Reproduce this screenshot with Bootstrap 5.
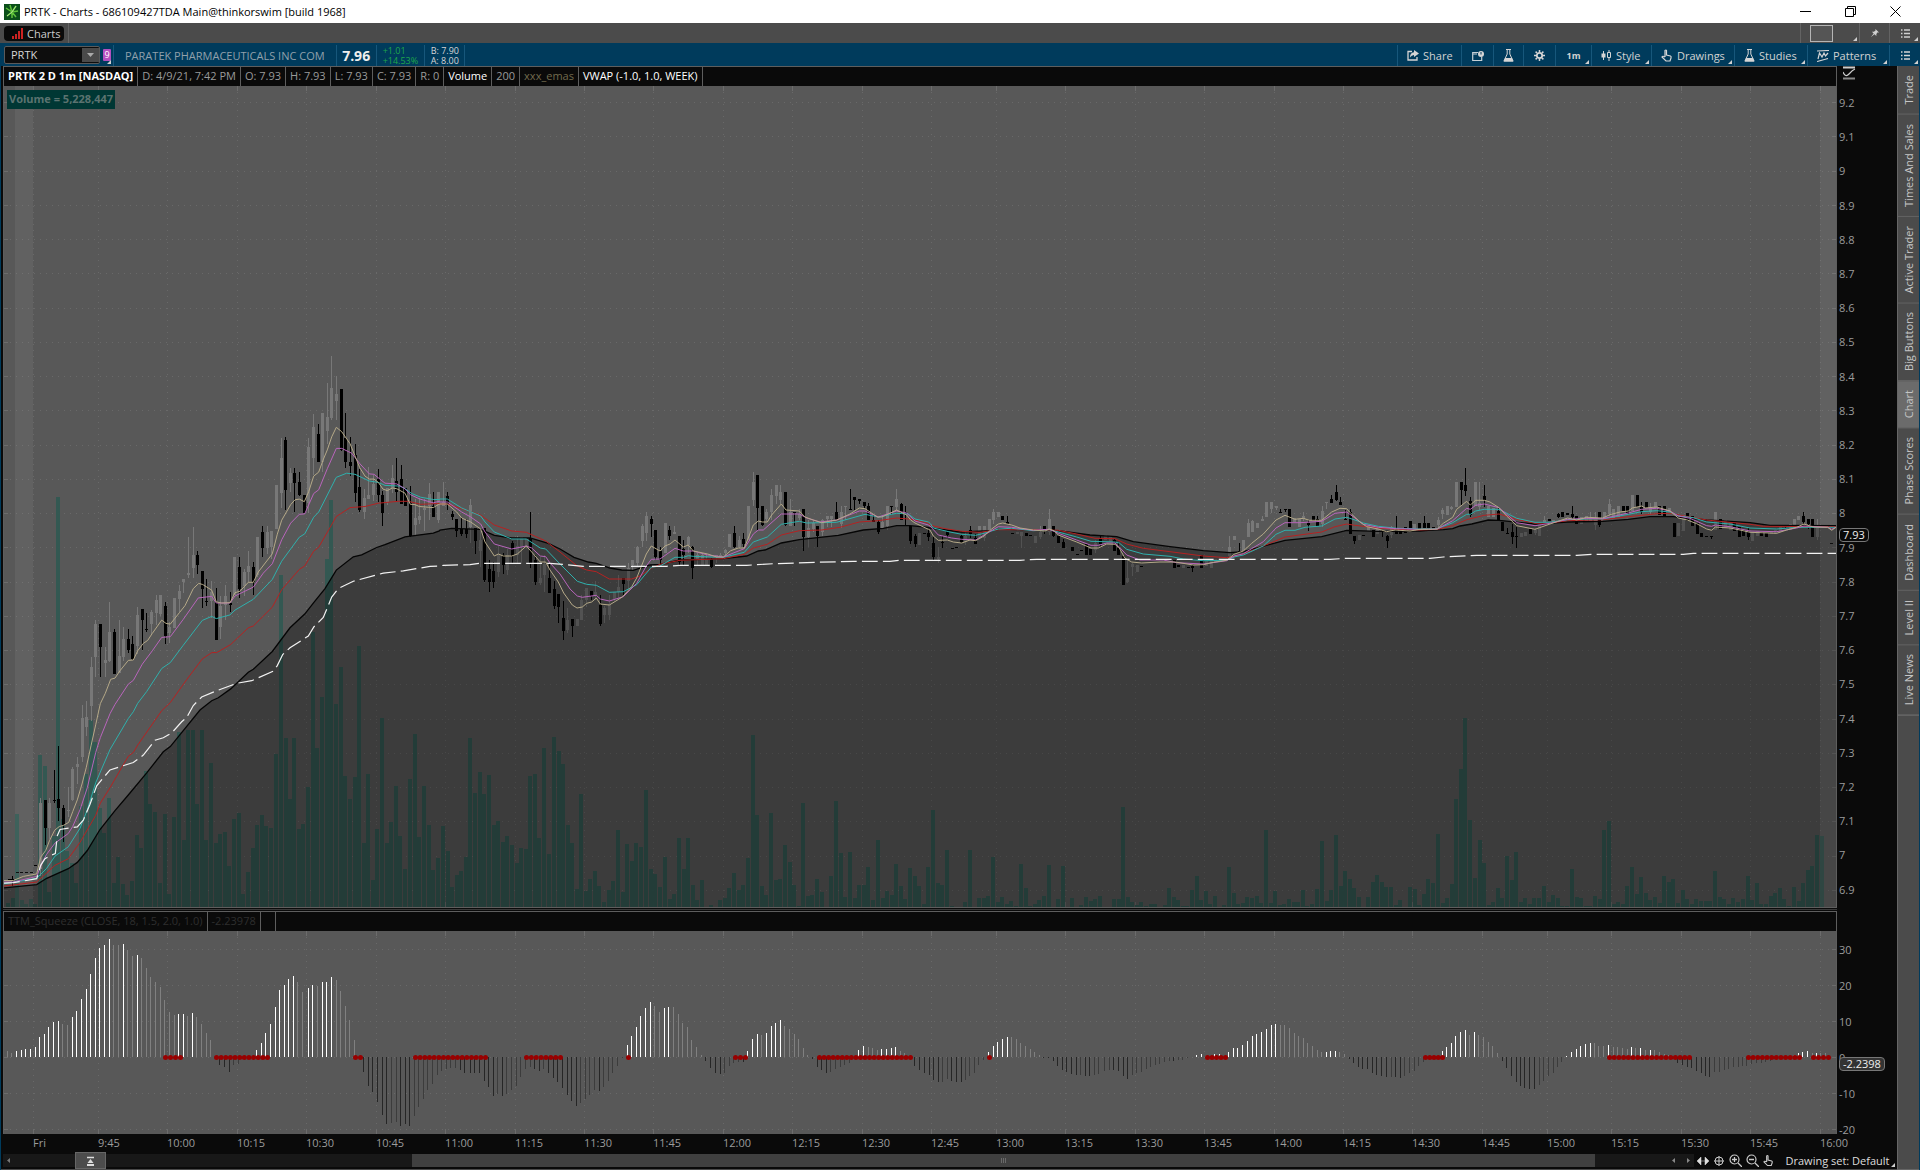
<!DOCTYPE html>
<html lang="en">
<head>
<meta charset="utf-8">
<meta name="viewport" content="width=device-width, initial-scale=1">
<title>PRTK - Charts</title>
<link href="https://cdn.jsdelivr.net/npm/bootstrap@5.3.0/dist/css/bootstrap.min.css" rel="stylesheet">
<style>
:root{--ink:#0a0a0a;--chrome:#4b4b4b;--blue:#003b5c;--line:#5e5e5e;--plot:#585858}
body{font:11px/16px "Open Sans","Noto Sans",sans-serif;background:var(--ink);color:#d2d2d2;overflow:hidden}
button{border:0;background:none;color:inherit;font:inherit;padding:0}
svg{display:block;flex:none}
.titlebar{height:23px;background:#fff;color:#000;padding-right:2px}
.win{width:45px;height:22px}
.tabbar{height:20px;background:var(--chrome)}
.charttab{height:15px;background:#0a0a0a;border-radius:4px;line-height:15px;color:#ccc}
.cell{height:100%;border-left:1px solid #636363;position:relative}
.corner::after{content:"";position:absolute;right:2px;bottom:2px;border:2px solid;border-color:transparent #d0d0d0 #d0d0d0 transparent}
.quote{height:23px;background:var(--blue);border-left:1px solid var(--blue);padding-left:3px}
.quote .seg{height:21px;margin-top:2px;border-left:1px solid #17577b;position:relative;display:flex;align-items:center;flex:none}
.symbox{width:96px;height:18px;background:#0d0d0d;border:1px solid #5a5a5a;border-radius:2px;overflow:hidden}
.symbox input{width:72px;background:none;border:0;color:#d6d6d6;font:inherit;padding:0 6px;outline:0}
.symbox button{width:17px;height:14px;background:#4a4a4a}
.linkbox{width:13px;height:23px;padding-left:3px}
.linkno{width:8px;height:12px;background:#b34fc0;color:#fff;font-size:9px;line-height:12px;text-align:center;border-radius:1px}
.company{padding:0 11px;color:#91a0ab}
.last{width:40px;font-size:14px;font-weight:700;color:#eee}
.tiny{font-size:9px;line-height:10px}
.change{width:48px;padding-left:6px;color:#1fa64b}
.bidask{width:40px;padding-left:6px;color:#d5d5d5}
.seg.tool{padding-left:9px}
.w30{width:30px}.w31{width:31px}.w32{width:32px}.w36{width:36px}.w59{width:59px}.w60{width:60px}.w64{width:64px}.w73{width:73px}.w82{width:82px}.w83{width:83px}
.frame{border-left:1px solid var(--blue);border-right:1px solid var(--blue);min-height:0}
.main{padding-left:2px;min-width:0;border-bottom:1px solid #4a4a4a}
.hdr{height:20px;border:1px solid var(--line);border-bottom:0;line-height:18px;color:#9a9a9a;background:var(--ink)}
.hdr>span{border-right:1px solid var(--line);padding:0 4px;height:19px;white-space:nowrap}
.hdr .ema{color:#726a4e}
.dim>span{color:#2e2e2e}
.hdr .blank{width:15px}
.axis{width:60px;flex:none;line-height:14px;color:#9b9b9b;padding-left:2px}
.pane{border:1px solid var(--line);border-width:0 1px;background:var(--plot);min-width:0}
.pane svg{width:100%;height:100%;position:absolute;inset:0}
.priceRow{flex:821 1 0;min-height:0}
.studyRow{flex:203 1 0;min-height:0}
.priceAxis{padding-top:10px;padding-bottom:10px}
.studyAxis{padding-top:12px;margin-bottom:-3px}
.split{height:4px;border-top:1px solid var(--line);margin-right:60px}
.split::after{content:"";display:block;height:1px;margin-top:1px;background:#3a3a3a}
.tag{position:absolute;left:2px;height:14px;border:1px solid #777;border-radius:4px;background:#0a0a0a;color:#eee;padding:0 3px;line-height:12px}
.tagPrice{top:53.8%}.tagStudy{top:61%;background:#333}
.voltag{position:absolute;left:3px;top:4px;height:19px;line-height:18px;padding:0 2px;background:#003734;color:#5b7370;font-weight:700}
.times{height:18px;line-height:18px;color:#9b9b9b;margin-right:60px;padding-left:1px}
.times span{flex:none;white-space:nowrap}
.scroll{height:17px}
.track{height:13px;background:#181818;min-width:0}
.beforeThumb{flex:410 1 0}
.thumb{background:#404040;height:13px;flex:1185 1 0}
.afterThumb{flex:95 1 0}
.expander{width:31px;height:17px;background:#4c4c4c;border:1px solid #666;margin-left:65px}
.chartTools{width:203px;padding-left:3px}
.side{width:22px;background:var(--chrome);border-left:1px solid #666;border-bottom:1px solid #666}
.side button{writing-mode:vertical-rl;transform:rotate(180deg);padding:9px 0;width:21px;line-height:20px;border-top:1px solid #636363;color:#c6c6c6}
.side button.on{background:#6b6b6b}
.side hr{margin:0;color:#999}
.set{color:#ddd;position:relative}
</style>
</head>
<body class="vh-100 d-flex flex-column">

<header class="titlebar d-flex align-items-center">
  <svg class="ms-1" width="16" height="16" viewBox="0 0 16 16"><rect width="16" height="16" fill="#0b4f1a"/><path d="M2 4l6 4M8 8L6 1M8 8l4-6M8 8l6-1M8 8l4 5M8 8v6M8 8l-5 4" stroke="#5fc23a" stroke-width="1.500"/><path d="M8 8l4-6M8 8l-5 4" stroke="#c8f0a0" stroke-width=".8"/></svg>
  <span class="ms-1 flex-fill">PRTK - Charts - 686109427TDA Main@thinkorswim [build 1968]</span>
  <button class="win" aria-label="Minimize"><svg class="mx-auto" width="11" height="11"><path d="M0 5.500h11" stroke="#000"/></svg></button>
  <button class="win" aria-label="Restore"><svg class="mx-auto" width="11" height="11"><path d="M.5 2.500h8v8h-8zM2.500 2.500v-2h8v8h-2" fill="none" stroke="#000"/></svg></button>
  <button class="win" aria-label="Close"><svg class="mx-auto" width="11" height="11"><path d="M.5.5l10 10M10.500.5l-10 10" stroke="#000"/></svg></button>
</header>

<nav class="tabbar d-flex align-items-center">
  <button class="charttab d-flex align-items-center gap-1 ms-1 px-1"><svg class="ms-1" width="11" height="11" fill="#c22"><path d="M0 8h2v3H0zM3 6h2v5H3zM6 3h2v8H6zM9 0h2v11H9z"/></svg><span>Charts</span></button>
  <span class="cell ms-1"></span>
  <span class="flex-fill"></span>
  <button class="cell corner w59" aria-label="Grid"><svg class="ms-2" width="25" height="17"><rect x="1.500" y=".5" width="22" height="16" fill="#555" stroke="#b5b5b5"/></svg></button>
  <button class="cell w30" aria-label="Pin"><svg class="mx-auto" width="8" height="8" viewBox="0 0 9 9" fill="#d0d0d0"><path d="M5 0l4 4-2 0-1 2 0 2-2-2-4 3 3-4-2-2h2l2-1z"/></svg></button>
  <button class="cell corner w31" aria-label="Menu"><svg class="mx-auto" width="9" height="9"><path d="M0 1h1.500M3 1h6M0 4.500h1.500M3 4.500h6M0 8h1.500M3 8h6" stroke="#d0d0d0" stroke-width="1.300"/></svg></button>
</nav>

<section class="quote d-flex align-items-center">
  <div class="symbox d-flex align-items-center"><input value="PRTK" aria-label="Symbol"><span class="flex-fill"></span><button aria-label="Symbols"><svg class="mx-auto" width="7" height="4"><path d="M0 0h7L3.500 4z" fill="#aaa"/></svg></button></div>
  <span class="linkbox position-relative corner d-flex align-items-center"><span class="linkno">9</span></span>
  <span class="seg company">PARATEK PHARMACEUTICALS INC COM</span>
  <span class="seg last justify-content-center">7.96</span>
  <span class="seg tiny change text-nowrap">+1.01<br>+14.53%</span>
  <span class="seg tiny bidask text-nowrap">B: 7.90<br>A: 8.00</span>
  <span class="seg"></span>
  <span class="flex-fill"></span>
  <button class="seg tool gap-1 w64"><svg width="12" height="11" viewBox="0 0 12 11"><path d="M5 1.500H1v8.500h9V7" fill="none" stroke="#d5d5d5" stroke-width="1.300"/><path d="M7 0l5 3.500L7 7V5Q4.500 5 3 7.500 3 2.500 7 2.200z" fill="#d5d5d5"/></svg>Share</button>
  <button class="seg justify-content-center w32" aria-label="Snapshot"><svg width="12" height="10" viewBox="0 0 12 10"><path d="M6 1.500H.700v8h9V6M1 3h4" fill="none" stroke="#c5d0d6" stroke-width="1.200"/><circle cx="9" cy="3" r="3" fill="#d5d5d5"/><path d="M9 1v2.500" stroke="#003b5c"/></svg></button>
  <button class="seg justify-content-center w30" aria-label="Lab"><svg width="11" height="13" viewBox="0 0 11 13"><path d="M3 .5h5M4.200 1v4L1 12h9L6.800 5V1" fill="none" stroke="#d5d5d5"/><path d="M2 9h7l1.500 3.500h-10z" fill="#d5d5d5"/></svg></button>
  <button class="seg justify-content-center w32" aria-label="Settings"><svg width="11" height="11" viewBox="0 0 11 11"><circle cx="5.500" cy="5.500" r="2.700" fill="none" stroke="#d5d5d5" stroke-width="1.800"/><path d="M5.500 0v2M5.500 9v2M0 5.500h2M9 5.500h2M1.600 1.600L3 3M8 8l1.400 1.400M1.600 9.400L3 8M8 3l1.400-1.400" stroke="#d5d5d5" stroke-width="1.500"/></svg></button>
  <button class="seg corner justify-content-center tiny fw-bold w36">1m</button>
  <button class="seg tool corner gap-1 w60"><svg width="11" height="11" viewBox="0 0 11 11"><path d="M2.500 1v9M8 0v2M8 8v3" stroke="#d5d5d5"/><path d="M.5 3.500h4v4h-4z" fill="#d5d5d5"/><path d="M6.500 2.500h3v5h-3z" fill="none" stroke="#d5d5d5"/></svg>Style</button>
  <button class="seg tool corner gap-1 w83"><svg width="12" height="13" viewBox="0 0 12 13"><path d="M4 8V1.500q1-1 1.500 0V6l4 1q1 .5.500 2l-1 3H5L1 8q.5-1.500 3 0" fill="none" stroke="#d5d5d5" stroke-width="1.200"/></svg>Drawings</button>
  <button class="seg tool corner gap-1 w73"><svg width="11" height="13" viewBox="0 0 11 13"><path d="M3 .5h5M4.200 1v4L1 12h9L6.800 5V1" fill="none" stroke="#d5d5d5"/><path d="M2 9h7l1.500 3.500h-10z" fill="#d5d5d5"/></svg>Studies</button>
  <button class="seg tool corner gap-1 w82"><svg width="12" height="12" viewBox="0 0 12 12"><path d="M0 1l12-.5M0 11.500l11-3M1 9l1.500-6 2.500 4 2-4 1.500 3L11 3" fill="none" stroke="#d5d5d5" stroke-width="1.200"/></svg>Patterns</button>
  <button class="seg corner justify-content-center w31" aria-label="More"><svg width="9" height="9"><path d="M0 1h1.500M3 1h6M0 4.500h1.500M3 4.500h6M0 8h1.500M3 8h6" stroke="#d5d5d5" stroke-width="1.300"/></svg></button>
</section>

<div class="frame d-flex flex-fill">
  <main class="main d-flex flex-column flex-fill">
    <div class="d-flex">
      <div class="hdr d-flex flex-fill"><span class="fw-bold text-white">PRTK 2 D 1m [NASDAQ]</span><span>D: 4/9/21, 7:42 PM</span><span>O: 7.93</span><span>H: 7.93</span><span>L: 7.93</span><span>C: 7.93</span><span>R: 0</span><span class="text-white">Volume</span><span>200</span><span class="ema">xxx_emas</span><span class="text-white">VWAP (-1.0, 1.0, WEEK)</span></div>
      <div class="axis"><svg class="ms-1" width="13" height="14"><path d="M0 1.500h12" stroke="#ccc" stroke-width="2"/><path d="M0 12.500h12" stroke="#888" stroke-width="2"/><path d="M0 6q2.500 6 6 2t6-5" fill="none" stroke="#ccc" stroke-width="1.200"/></svg></div>
    </div>
    <div class="priceRow d-flex">
      <div class="pane flex-fill position-relative"><svg id="price" viewBox="4 86 1832 821" preserveAspectRatio="none"></svg><span class="voltag">Volume = 5,228,447</span></div>
      <div class="axis priceAxis position-relative d-flex flex-column justify-content-between"><span>9.2</span><span>9.1</span><span>9</span><span>8.9</span><span>8.8</span><span>8.7</span><span>8.6</span><span>8.5</span><span>8.4</span><span>8.3</span><span>8.2</span><span>8.1</span><span>8</span><span>7.9</span><span>7.8</span><span>7.7</span><span>7.6</span><span>7.5</span><span>7.4</span><span>7.3</span><span>7.2</span><span>7.1</span><span>7</span><span>6.9</span><span class="tag tagPrice">7.93</span></div>
    </div>
    <div class="split"></div>
    <div class="d-flex">
      <div class="hdr dim d-flex flex-fill"><span>TTM_Squeeze (CLOSE, 18, 1.5, 2.0, 1.0)</span><span>-2.23978</span><span class="blank"></span></div>
      <div class="axis"></div>
    </div>
    <div class="studyRow d-flex">
      <div class="pane flex-fill position-relative"><svg id="study" viewBox="4 931 1832 203" preserveAspectRatio="none"></svg></div>
      <div class="axis studyAxis position-relative d-flex flex-column justify-content-between"><span>30</span><span>20</span><span>10</span><span>0</span><span>-10</span><span>-20</span><span class="tag tagStudy">-2.2398</span></div>
    </div>
    <div class="times d-flex" id="times"></div>
    <div class="scroll d-flex align-items-center">
      <div class="track d-flex align-items-center flex-fill">
        <div class="beforeThumb d-flex align-items-center"><svg class="ms-1" width="3" height="5"><path d="M3 0v5L0 2.500z" fill="#777"/></svg><button class="expander" aria-label="Expand"><svg class="mx-auto" width="9" height="10"><path d="M1 1.500h7" stroke="#ddd" stroke-width="1.500"/><path d="M4.500 3l3 4h-6zM1 8h7v2H1z" fill="#ddd"/></svg></button></div>
        <div class="thumb d-flex align-items-center justify-content-center"><svg width="5" height="5"><path d="M.5 0v5M2.500 0v5M4.500 0v5" stroke="#6a6a6a"/></svg></div>
        <div class="afterThumb d-flex align-items-center justify-content-end gap-2 pe-1"><svg class="me-1" width="3" height="5"><path d="M3 0v5L0 2.500z" fill="#888"/></svg><svg width="3" height="5"><path d="M0 0v5l3-2.500z" fill="#888"/></svg></div>
      </div>
      <div class="chartTools d-flex align-items-center gap-1">
        <svg width="12" height="8"><path d="M0 4l4-4v8zM12 4L8 0v8zM3 4h6" fill="#ddd" stroke="#ddd" stroke-width=".5"/></svg>
        <svg width="12" height="12"><circle cx="6" cy="6" r="4" fill="none" stroke="#ccc"/><path d="M6 1v10M1 6h10" stroke="#ccc"/></svg>
        <svg width="13" height="13"><circle cx="5.500" cy="5.500" r="4.500" fill="none" stroke="#ccc" stroke-width="1.200"/><path d="M3 5.500h5M5.500 3v5M9 9l4 4" stroke="#ccc" stroke-width="1.300"/></svg>
        <svg width="13" height="13"><circle cx="5.500" cy="5.500" r="4.500" fill="none" stroke="#ccc" stroke-width="1.200"/><path d="M3 5.500h5M9 9l4 4" stroke="#ccc" stroke-width="1.300"/></svg>
        <svg width="11" height="13" viewBox="0 0 12 13"><path d="M4 8V1.500q1-1 1.500 0V6l4 1q1 .5.500 2l-1 3H5L1 8q.5-1.500 3 0" fill="none" stroke="#ccc" stroke-width="1.200"/></svg>
        <button class="set corner flex-fill text-nowrap text-center">Drawing set: Default</button>
      </div>
    </div>
  </main>
  <aside class="side d-flex flex-column">
    <button>Trade</button><button>Times And Sales</button><button>Active Trader</button><button>Big Buttons</button><button class="on">Chart</button><button>Phase Scores</button><button>Dashboard</button><button>Level II</button><button>Live News</button><hr>
  </aside>
</div>

<script src="https://cdn.jsdelivr.net/npm/bootstrap@5.3.0/dist/js/bootstrap.bundle.min.js"></script>
<script>
// Every series is stored in windows; a window has an origin and a number of data units per chart pixel.
const A={x:0,y:340,sx:3,sy:2.703}, B={x:440,y:440,sx:3,sy:3}, C={x:930,y:460,sx:3,sy:3}, D={x:1400,y:440,sx:3,sy:3};
const px=(w,v)=>w.x+v/w.sx, py=(w,v)=>w.y+v/w.sy;
const rect=(x,y,w,h)=>`M${x} ${y}h${w}v${h}h${-w}z`;

// volume: "x:top" anchors a bar, a bare number is the next bar
const volume=[
[A,'24:1522 1508 51:1281 1515 1525 1510 1525 120:1122 1152 1492 1340 174:424 1295 1380 1415 1468 244:1260 1172 1027 1087 1265 1333 327:1238 1468 1398 1470 1500 396:1463 1338 1373 1165 1255 466:1276 1468 1281 1497 1290 537:1060 1352 1054 1054 1255 605:1054 1352 1144 1360 1336 674:1330 1422 1295 1279 1497 744:1437 1373 1311 1284 1314 813:1319 1119 843:635 1076 1242 882:1076 1322 1308 1208 938:790 1103 965 980:592 993:433 1008:984 1022:884 1179 1242 1182 1077:827 1360 1173 1460 1322 1146:1022 1360 1303 1206 1341 1216:1430 1187 1244:1065 1344 1206 1286:1311 1433 1400'],
[B,'9:1158 1234 1342 1305 1293 77:1251 90:894 1059 119:996 1062 147:1005 1155 1143 1206 1188 216:1215 1269 1224 1227 270:1008 1002 1194 312:924 1242 342:891 933 369:972 1155 1209 1347 423:1062 1353 1317 1293 1338 492:1386 1350 1323 534:1170 1356 1212 1263 1209 1221 618:1050 1287 1302 1341 675:1251 1377 1362 717:1194 1287 744:1194 1335 1380 785:1320 1400 1396 1400 840:1380 1374 1344 882:1299 1350 1335 1254 939:885 951:1125 1338 1365 993:1119 1320 1317 1035:1215 1266 1335 1398 1089:1089 1368 1365 1131:1317 1356 1400 1308 1188:1083 1239 1371 1230:1236 1374 1335 1335 1284:1281 1380 1314:1200 1374 1353 1365 1368:1272 1338 1377 1410:1284 1308 1338 1392 1464:1281'],
[C,'9:1050 1269 1275 51:1170 1338 1340 1340 1326 120:1170 1340 1314 1314 1308 189:1191 1326 1311 1332 1323 1338 273:1212 1284 1338 1332 1320 1308 357:1215 1340 1317 399:1218 1340 1314 1340 1335 468:1311 1323 1317 1308 1340 538:1340 1317 1317 579:1041 1311 1326 1335 1326 1338 662:1332 1332 1340 1335 717:1284 1311 1320 1338 1338 786:1290 1248 1320 1293 1332 855:1308 1340 1335 897:1221 1299 1332 1329 1311 1314 1308 1329 1008:1110 1329 1293 1335 1332 1077:1317 1326 1326 1290 1338 1332 1161:1287 1176:1143 1323 1290 1218:1125 1278 1245:1233 1257 1284 1311 1340 1314:1311 1266 1245 1266 1281 1383:1281 1335 1320 1340 1440:1281 1287 1335 1302 1493:1257'],
[D,'0:1380 30:1341 1347 1395 1362 84:1317 1329 114:1182 1389 1374 1332 168:1077 987 195:834 1140 225:1314 1200 252:1269 1395 1386 1344 1374 321:1248 1320 348:1236 1386 1374 1392 1374 1374 432:1338 1386 1365 1374 1398 1398 516:1287 1371 1374 1398 1398 585:1368 1377 612:1170 627:1143 1392 1386 1392 1338 696:1281 1362 1311 1359 1380 765:1371 1389 1308 1326 1317 834:1389 1350 1377 1392 1377 903:1383 1383 1383 945:1293 1371 1377 1392 1374 1386 1029:1377 1308 1380 1329 1392 1098:1392 1368 1359 1344 1377 1168:1398 1341 1383 1329 1290 1236:1278 1251:1185 1266:1188']];

// candles: x, g(rey) or k (black), high, low and, where it differs, body top and bottom
const candles=[
[A,'27k1458,1461 37k1448,1475,1458,1461 51k1438,1441 65k1438,1441 79k1438,1441 93k1438,1441 106k1419,1422 121g1237,1450,1252,1430 136k1244,1365,1244,1319 149g1237,1350,1252,1319 163k1161,1252,1244,1247 176k1097,1300,1241,1264 190k1256,1356,1264,1310 205g1207,1290,1270,1272 218g1153,1246,1160,1244 232g1126,1199,1146,1155 247g986,1140,1022,1127 259g977,1070,1020,1045 274g856,1030,884,988 287g756,911,769,857 301k768,911,768,830 316g830,911,866,873 328g709,870,788,868 343k782,903,789,903 358g757,900,855,900 370g777,868,807,856 385k782,846,807,838 397k801,865,822,862 412g721,850,742,828 427k726,837,728,757 439k738,790,781,784 454g729,795,734,768 470g690,771,704,739 481g689,745,689,740 496k707,821,719,801 508g763,819,776,791 523g698,779 538g662,735,679,700 550g646,684,646,654 565g532,642,630,634 580g505,642,581,615 592k569,633,581,608 607k624,725,624,672 619k645,718,706,709 634g652,752,680,706 649k671,810,709,810 661g691,808,720,776 676g662,757,691,716 691k680,734,710,717 704g587,690 718k587,698,613,672 733g619,692,626,666 745g569,655,610,626 760k600,690,613,655 772g532,640,532,635 787k504,587,518,562 802g504,579,518,562 814g515,593,515,560 829g392,510 845g264,455,318,414 856k262,459,270,405 871g346,410,360,386 883k346,466,360,387 898k356,423,384,420 913k419,468 925g264,468,290,440 940g200,365,235,320 955k227,330,254,330 967g198,356,198,330 982g116,280,209,245 994g42,216,130,210 1009g98,216,146,165 1024k132,300,132,298 1036k198,347,265,330 1051k262,367,330,340 1066k282,438,311,414 1078k350,466,397,460 1093g404,485,428,466 1105g342,430,419,430 1120g365,436,390,419 1135k350,438,377,420 1147k409,502,419,467 1162g401,445,401,437 1177g339,414,373,400 1189k320,438,381,410 1204k339,442,377,442 1216k401,449 1231k395,532,440,530 1246g431,528,480,500 1258g427,498,475,487 1273g430,515,455,460 1288g387,486,415,450 1300k411,478,450,478 1315g411,495,411,487 1330g385,450,438,450 1342k411,459,423,446 1357k463,486,470,478 1369k485,532,485,516 1384k480,530,512,524 1399k485,536,512,524 1411g431,549,446,505 1426k509,579,509,542'],
[B,'121g264,380,300,333 133k264,426,264,420 148k360,456,387,426 160k366,444,393,426 175g318,411,345,396 190k339,402,345,375 202g327,405,345,390 217k303,372,309,348 232g288,372,318,345 244g291,372,291,320 259g294,327,294,318 271k216,384,294,370 286k345,435,360,426 301g350,435,414,430 313g345,456,372,405 328k372,459,414,459 343k423,507,447,498 355k462,549,462,501 370k483,600,534,573 382g504,579,540,570 397k537,591,537,558 412g537,558 424g465,540,480,540 439g444,501,444,480 454k453,480,453,468 466g423,480,456,468 481k465,558,495,552 493g498,549,504,525 508g465,540,492,525 523g456,486,456,477 535g405,474,440,456 550k414,465,414,432 565g370,447,384,424 577g360,390,360,375 592g318,378,321,369 607g252,321,258,303 619g216,302,228,279 634k228,291,237,252 646k270,360,270,350 661k321,372,333,360 676g249,339 688k258,300,270,288 703g258,282,276,282 718k288,375,288,366 730k300,375,327,345 745g288,339,291,315 757k318,417,321,384 772g339,378,345,360 787g339,378,345,378 799g342,378,360,378 814k354,384,357,381 829g345,369,345,351 841g339,351,345,351 856g327,350,330,340 868g282,321 883k258,324,279,321 898g288,324,300,321 910k279,321,297,312 925g198,300 940g96,198,126,180 952k105,270,105,204 967k198,258,198,255 979g207,243,216,237 994g147,240,165,216 1009g135,192,135,168 1021g135,192,156,180 1036k156,258,156,255 1051g177,258,216,258 1063k216,258,216,219 1078g207,240,222,234 1090k207,333,207,291 1105g240,321,264,291 1120g240,276,249,267 1132k258,321,258,288 1147g237,288,240,276 1162g228,261,228,237 1174g228,261,228,237 1189k186,240,216,240 1204g198,264,216,252 1216g198,240,198,201 1231k147,210,207,210 1243k171,210,171,180 1258k177,192,177,183 1273k186,207,186,198 1285k189,240,198,240 1300k222,246,240,246 1315k240,282,246,276 1327g228,264,246,264 1342g198,270,198,258 1354k198,225,198,201 1369g147,213,177,201 1384k189,240,192,240 1396k198,258,216,222 1411k258,312,258,303 1426k282,321,288,312 1438g279,315 1453k279,282 1465k267,303,279,291 1480k291,360,309,351 1495g320,370,350,358'],
[C,'37k228,264,246,249 52k213,234,213,225 67k264,267 79k261,264 94k225,250,228,249 106g216,255,228,246 121k198,234,210,222 136k222,252,234,252 148g198,234 163g198,243,198,234 178g177,216 190g147,192,156,180 205g156,171 217k168,180 232k168,192,186,192 247k219,222 262g216,222 274g216,264,216,228 289k219,228 301k225,228 316g228,249 331g198,237,216,231 343k198,222,198,207 358g147,225,177,216 370k198,231,198,228 385k228,249 400k237,264,246,264 427k261,273 442k282,285 454k270,273 469k252,285 481k267,285 496g240,279,249,270 511k228,261,237,252 526g225,240 541g228,246 553k237,273,240,273 565k246,285,264,285 580k288,375 592g297,369,354,366 607g309,348,312,321 622g315,336 634k318,321 733k300,324 745k315,321 760g315,324 775k321,324 787k315,336,318,324 814k285,324 829g303,318 844g300,324 856g297,306 898g228,291,261,288 913g228,240 928k249,276,273,276 940g240,273 955g177,231,189,231 967g180,216,183,216 982g189,204 997g168,183,177,183 1009g126,171 1024g126,160,126,147 1039g138,150,138,144 1051k147,159,156,159 1066k147,156,147,150 1078k147,201 1093g174,186 1108g177,201 1120g156,183,168,177 1135k180,213,189,195 1150k168,183 1162k168,198,177,198 1177g138,201,153,192 1189g126,147,126,129 1204k105,129,117,129 1219k75,123,96,120 1231k111,135,126,135 1246k150,180,177,180 1261k147,222,156,222 1273k228,252,228,243 1288g225,240 1300k225,228 1315g198,213 1330k210,231 1342g207,222 1357k210,231,210,213 1372k225,264,228,243 1384g198,234,201,225 1399k168,222,207,222 1411k204,222 1426k201,219 1441k183,204 1453g192,216 1468k189,207 1483k168,204,189,204 1495k189,204'],
[D,'100k261,270 115g230,264,240,255 127g204,237,210,222 142g198,225 154g198,210,201,207 169g126,201 184k126,195,126,150 196k84,168,135,153 211k171,231,183,225 226g126,198 238g126,210,190,200 253k135,200,168,180 265g198,230 280g204,231 295k201,243,213,240 307k246,273 322k264,282,279,282 337k252,312,276,291 349k261,324,288,291 364g279,291 376g276,288 391k267,282 406g264,285,270,280 418g250,288 433g228,252,240,252 448k237,243 460g240,246 475k219,234,222,231 487k216,231 502k219,225 517k198,240,222,231 529k228,252 544g231,252 559g228,246 571g216,246,234,246 586g216,270,234,255 598k216,261,216,255 613g216,240 628g177,228,192,222 640g207,234 655g198,231 670k198,213 682k198,222 697g165,213 712k165,201 724k186,222,200,216 739k186,204 751g189,225,200,216 766g186,204 778k198,225 793k198,228 808g204,216 823k249,291 835g249,288 850g225,273 862k219,243 877k228,258 892k249,282 904k279,291 919k288,291 934k288,297,288,291 946g216,270 961k237,267 976g240,264 991g246,270 1003k249,273 1018k261,291 1030k270,288 1045k264,300,276,291 1057g276,303 1072g273,288 1084k276,288 1099k279,291 1114g273,282 1126g270,282 1141g261,276 1156k255,264,258,261 1171g252,270 1183g237,264 1195g228,240 1210k216,252,228,246 1225k237,267,237,252 1237k237,291 1252g237,300,255,291 1294k309,312']];

// moving averages and VWAP: a colour, then one point list per window
const averages={
tan:['#b5a988',
'12,1461 40,1461 70,1450 110,1443 122,1398 137,1380 149,1352 164,1325 178,1315 190,1312 206,1304 218,1275 232,1243 246,1200 259,1155 273,1097 287,1040 301,983 316,955 332,917 345,914 360,894 385,866 400,865 413,840 430,820 443,812 457,793 485,757 498,766 511,768 525,752 539,736 555,718 580,672 596,658 608,661 635,676 649,708 665,711 690,710 705,683 720,679 745,655 760,655 775,627 817,578 832,525 845,487 872,445 885,432 898,430 913,437 926,410 941,368 956,357 969,325 982,297 995,262 1009,236 1025,248 1050,280 1079,345 1095,368 1108,376 1122,376 1135,385 1149,403 1162,407 1177,400 1190,402 1215,414 1231,444 1245,445 1258,450 1300,453 1315,445 1318,444',
'0,192 22,192 50,216 65,234 92,246 122,267 135,306 163,348 175,342 190,348 215,348 232,342 259,318 275,336 301,366 317,366 330,390 355,426 371,459 397,495 411,504 427,501 440,490 455,486 469,474 481,492 508,495 523,486 547,471 575,440 590,414 602,384 619,342 634,318 660,333 675,318 690,312 705,300 730,321 745,315 760,333 775,336 803,342 830,351 850,351 872,332 895,324 913,324 925,294 940,255 955,243 967,246 982,246 995,225 1024,192 1038,210 1078,213 1095,231 1120,240 1145,248 1190,240 1230,222 1258,204 1275,206 1290,216 1312,231 1325,231 1345,222 1370,210 1400,225 1412,240 1425,249 1465,268',
'0,210 10,228 25,241 52,240 70,246 95,249 120,240 137,242 162,228 185,207 205,192 218,189 245,195 270,204 310,210 345,213 358,207 372,212 385,225 440,246 483,264 505,264 530,252 555,253 568,264 585,295 605,306 635,309 690,306 735,306 790,315 820,314 850,307 890,301 912,283 940,273 965,250 1000,222 1038,180 1065,166 1095,178 1120,175 1138,181 1175,181 1205,156 1230,145 1250,146 1262,160 1290,186 1310,200 1345,207 1370,215 1395,210 1440,213 1470,208',
'85,268 112,267 130,250 158,232 170,208 200,184 211,195 227,181 253,181 270,186 297,203 320,228 350,257 405,268 450,252 503,234 530,240 560,232 608,234 630,224 660,216 685,213 697,204 725,198 735,204 770,201 810,213 835,234 862,240 890,251 920,267 935,271 946,261 990,264 1020,270 1050,277 1130,280 1160,270 1190,262 1212,252 1240,261 1283,262 1295,271 1308,262'],
pink:['#b865bb',
'12,1465 40,1465 110,1450 125,1415 140,1390 165,1360 205,1334 218,1315 240,1270 262,1210 287,1115 301,1075 330,1010 345,985 385,930 400,920 427,876 457,840 485,804 511,802 550,755 595,697 635,693 649,711 690,711 705,692 760,668 790,630 817,605 845,540 872,495 898,471 914,470 941,415 956,405 982,348 1009,293 1025,293 1055,306 1080,335 1108,362 1122,363 1155,387 1190,389 1215,402 1231,418 1260,430 1300,440 1318,436',
'0,186 22,186 65,216 92,231 122,252 135,276 163,312 215,327 259,318 275,324 301,348 317,350 330,369 360,402 390,447 412,468 427,472 469,466 481,477 508,483 550,470 590,430 619,378 634,358 660,357 705,325 730,333 760,333 803,345 850,351 913,326 940,282 955,270 970,270 1024,222 1078,222 1100,234 1140,246 1190,240 1258,213 1275,213 1315,231 1370,213 1400,219 1425,243 1465,255',
'0,198 25,225 65,234 95,238 137,240 162,225 205,200 245,202 310,211 358,208 385,220 440,240 483,256 505,256 530,249 555,249 568,261 590,285 630,300 700,300 740,308 820,312 890,302 912,288 940,281 1000,245 1038,204 1065,188 1110,188 1175,184 1215,160 1250,156 1275,174 1300,193 1345,202 1400,206 1470,208',
'85,268 112,267 158,242 200,205 211,208 227,196 253,192 297,203 350,248 405,257 450,250 503,238 560,235 608,236 685,219 725,208 770,205 810,213 835,228 870,235 920,257 935,259 946,255 990,260 1050,273 1130,275 1190,264 1212,258 1283,262 1295,268 1308,262'],
cyan:['#2fb0ac',
'12,1470 110,1455 140,1428 165,1395 205,1370 240,1320 262,1270 287,1197 330,1107 385,1023 400,1005 413,982 440,950 485,888 511,872 550,825 607,758 635,747 649,753 690,743 705,730 760,701 817,647 845,598 898,533 914,524 941,479 956,465 1009,371 1040,360 1065,363 1108,381 1135,385 1155,393 1200,395 1215,402 1235,415 1262,425 1300,431 1318,431',
'0,177 22,177 65,204 122,228 135,246 163,276 215,297 259,297 301,324 317,327 360,372 412,424 440,433 469,436 508,457 550,455 590,434 634,382 660,378 705,352 730,352 745,347 760,349 850,352 913,337 940,306 982,291 1024,253 1078,244 1100,249 1190,247 1275,223 1315,231 1370,220 1405,222 1425,237 1465,246',
'0,190 10,204 60,216 95,223 137,226 162,220 205,207 245,205 310,212 358,209 385,216 440,231 483,244 555,246 568,249 590,268 640,282 720,289 760,297 820,302 890,301 912,291 940,285 1000,258 1038,223 1065,211 1095,211 1125,202 1175,198 1215,177 1250,172 1275,180 1300,189 1345,199 1400,205 1470,207',
'85,267 112,266 158,248 200,223 211,223 227,213 253,208 297,208 350,235 405,247 450,247 503,239 560,237 608,237 685,223 725,215 770,212 810,216 835,228 880,233 920,246 990,252 1050,264 1130,267 1190,262 1308,262'],
red:['#b52222',
'12,1476 110,1465 165,1420 205,1402 240,1358 287,1285 301,1252 330,1210 385,1125 400,1115 413,1095 485,1002 511,980 560,918 607,862 635,845 650,845 692,823 745,778 760,773 817,722 845,675 898,620 914,611 941,571 956,560 990,507 1009,477 1050,453 1095,450 1135,441 1195,436 1225,436 1262,444 1318,442',
'0,192 22,192 122,225 163,255 215,273 259,277 317,303 360,336 412,378 440,390 469,395 508,417 575,417 600,408 634,385 660,373 720,361 850,356 913,343 940,324 982,313 1024,285 1078,272 1145,270 1200,262 1258,246 1315,242 1370,234 1405,237 1425,240 1465,249',
'0,195 40,205 95,214 150,217 205,209 310,209 385,211 440,222 495,235 555,236 590,252 640,265 720,275 820,288 890,293 912,289 940,282 1000,258 1065,231 1175,216 1215,200 1250,192 1275,196 1345,204 1400,208 1470,210',
'85,269 112,268 158,257 200,239 253,226 297,222 350,238 405,250 450,249 503,242 608,239 685,230 770,221 810,220 870,231 920,240 1050,253 1090,259 1308,260'],
black:['#050505',
'12,1481 110,1472 140,1455 205,1429 232,1412 262,1380 300,1323 345,1272 385,1230 440,1170 490,1113 511,1099 600,1000 635,975 655,967 692,943 745,898 760,890 817,842 870,778 914,741 941,710 975,672 1009,622 1060,586 1085,581 1130,561 1155,553 1215,532 1300,522 1318,516',
'0,270 35,265 122,268 163,286 215,294 270,294 325,310 360,327 402,352 445,366 469,370 510,384 545,390 580,391 630,375 660,373 720,360 850,356 920,348 955,333 975,330 1024,309 1078,299 1195,286 1270,270 1330,265 1370,257 1410,257 1465,262',
'0,204 95,216 185,212 210,207 385,212 480,225 560,230 610,245 720,260 820,272 900,278 940,275 1020,253 1065,241 1175,230 1250,211 1345,214 1470,213',
'85,271 130,269 158,266 180,258 215,252 265,240 297,241 405,252 503,246 608,244 685,238 750,230 820,230 920,240 1050,248 1110,256 1308,257'],
vwap:['#f2f2f2',
'12,1468 40,1467 110,1456 122,1420 135,1402 152,1393 166,1388 172,1340 180,1323 232,1316 250,1298 270,1255 290,1205 330,1162 400,1142 430,1122 465,1082 490,1075 515,1062 545,1032 560,1020 580,988 605,965 650,948 710,928 755,921 820,895 832,880 848,850 870,832 925,800 942,775 970,750 995,695 1015,672 1060,652 1150,630 1210,624 1290,612 1318,611',
'10,376 90,374 120,370 330,370 430,379 680,379 720,376 920,376 1000,371 1130,367 1240,364 1350,364 1380,361 1465,361',
'0,301 270,301 320,298 1200,298 1250,295 1400,295',
'0,355 90,355 130,351 230,346 530,346 580,343 850,343 880,340 1308,340']};

const times=[['Fri',33],['9:45',98],['10:00',167],['10:15',237],['10:30',306],['10:45',376],['11:00',445],['11:15',515],['11:30',584],['11:45',653],['12:00',723],['12:15',792],['12:30',862],['12:45',931],['13:00',996],['13:15',1065],['13:30',1135],['13:45',1204],['14:00',1274],['14:15',1343],['14:30',1412],['14:45',1482],['15:00',1547],['15:15',1611],['15:30',1681],['15:45',1750],['16:00',1820]];

function grid(top,bottom,rows){
  let dots='',ticks='';
  for(const [,x] of times){dots+=`M${x+.5} ${top}V${bottom}`;ticks+=`M${x+.5} ${top}v5M${x+.5} ${bottom}v-5`}
  for(const y of rows){dots+=`M4 ${y+.5}H1836`;ticks+=`M4 ${y+.5}h4M1836 ${y+.5}h-4`}
  return `<path d="${dots}" stroke="#696969" stroke-dasharray="1 5"/><path d="${ticks}" stroke="#6c6c6c"/>`;
}
function linePath(parts){
  const wins=[A,B,C,D];
  return 'M'+parts.map((p,i)=>p.split(' ').map(q=>{const[a,b]=q.split(',');return px(wins[i],+a).toFixed(1)+' '+py(wins[i],+b).toFixed(1)}).join('L')).join('L');
}

let vol='';
for(const [w,s] of volume){let x=0;for(const t of s.split(' ')){const p=t.split(':');if(p[1]){x=+p[0]}else x+=13.85;
  const y=Math.round(py(w,+p[p.length-1]));if(y<907)vol+=rect(Math.round(px(w,x))-2,y,4,907-y)}}
let grey='',black='';
for(const [w,s] of candles)for(const t of s.split(' ')){
  const m=t.match(/^(\d+)([gk])(.+)$/),v=m[3].split(',').map(n=>Math.round(py(w,+n))),x=Math.floor(px(w,+m[1]));
  const bt=v[2]??v[0],bb=v[3]??v[1];
  const d=rect(x,v[0],1,Math.max(1,v[1]-v[0]))+rect(x-1,bt,3,Math.max(1,bb-bt));
  if(m[2]=='g')grey+=d;else black+=d}
const rows=[];for(let i=0;i<24;i++)rows.push(Math.round(102+34.25*i));
const blackLine=linePath(averages.black.slice(1));
let out=grid(86,907,rows);
out+=`<path d="${vol}" fill="#325852" opacity=".95" shape-rendering="crispEdges"/>`;
out+=`<path d="${grey}" fill="#787878" shape-rendering="crispEdges"/><path d="${black}" fill="#000" shape-rendering="crispEdges"/>`;
out+=`<path d="${blackLine}V907H4z" fill="#000" opacity=".31"/>`;
out+=`<path d="${rect(15,86,18,821)+rect(1820,86,16,821)}" fill="#fff" opacity=".055"/>`;
for(const k of ['black','red','cyan','pink','tan'])out+=`<path d="${linePath(averages[k].slice(1))}" fill="none" stroke="${averages[k][0]}" stroke-width="${k=='black'?1.3:1}"/>`;
out+=`<path d="${linePath(averages.vwap.slice(1))}" fill="none" stroke="${averages.vwap[0]}" stroke-width="1.200" stroke-dasharray="15.800 5.200"/>`;
document.getElementById('price').innerHTML=out;

// squeeze histogram: top or bottom of each bar with its colour letter
const histogram=[
[{x:0,y:900,sx:2.45,sy:3},11.35,471,'18:453g 458g 453w 450w 447w 447w 86:441w 411w 402w 381w 366w 143:363w 372g 375g 177:351w 333w 297w 267w 222w 233:174w 144w 135w 117w 135g 135g 302:132w 150g 168g 165w 174g 358:204g 231g 246g 261g 300g 415:336g 345g 342w 342w 348g 471:339w 351g 372g 399g 420g 527:476d 495d 501d 516d 495e 584:492e 478e 472e 472e 450w 640:429w 399w 372w 321w 270w 696:255w 237w 228w 246g 276g 755:264w 255w 258g 246w 246w 812:231w 240g 273g 318g 360g 868:420g 472d 516d 558d 576d 925:606d 645d 672d 669e 666e 981:678d 672d 678d 648e 621e 1037:597e 570e 552e 525e 513e 1093:507e 504e 504e 510d 519d 1152:519d 519d 519d 543d 561d 1208:588d 582e 588d 582e 570e 1265:558e 531e 507e 501e 507d 1321:513d 507e 519d 534d 546d 1378:564d 585d 603d 618d 609e 1434:597e 585e 570e 573d 561e 1490:543e 519e 498e 474e 1537:435w 408w 381w'],
[{x:600,y:980,sx:1.742,sy:3},8.06,231,'71:108w 84w 66w 78g 96g 112:84w 81w 81g 102g 129g 152:141g 180g 201g 225g 243d 193:264d 279d 282d 279e 258e 233:248e 246e 246d 213w 177w 274:162w 165g 159w 138w 129w 314:120w 138g 147g 162g 177g 354:204g 225g 237d 261d 270d 394:279d 276e 267e 262e 255e 435:249e 231e 210w 198w 201g 475:204g 210g 207w 207w 204w 515:201w 213g 219g 231g 258d 557:270d 279d 285d 300d 306d 597:306e 297e 303d 306d 306d 636:300e 288e 279e 255e 240e 677:216w 198w 186w 177w 171w 717:171g 177g 189g 198g 207g 757:216g 225g 234d 233d 243d 797:258d 270d 276d 282d 285d 837:285e 288d 288d 285e 282e 879:273e 270e 270d 273d 288d 919:297d 285e 279e 276e 267e 959:261e 255e 252e 246e 243e 999:243d 240e 240e 234e 231e 1039:225w 222w 227g 227g 222w 1079:222w 227g 216w 204w 204w 1120:195w 183w 168w 162w 156w 1161:147w 135w 132w 135g 135g 1201:144g 159g 168g 174g 189g 1241:198g 210g 216g 216w 213w 1281:213w 216g 222g 237d 249d 1321:261d 267d 267d 279d 285d 1362:288d 291d 291e 291d 294d 1402:288e 279e 273e 258e 246e 1443:238e 231e 231e 213w 201w 1483:189w 168w 156w 150w 165g 1523:156w 165g 171g 186g 198g 1564:219g'],
[{x:1500,y:900,sx:3,sy:3},13.85,471,'7:483d 504d 528d 546d 61:558d 564d 567d 567d 118:555e 543e 528e 519e 172:501e 486e 468w 456w 229:447w 438w 432w 429w 283:429g 438g 438g 435w 340:441g 441g 444g 447g 394:441w 444g 444w 450g 451:450w 450g 456g 462g 505:465g 476d 489d 495d 562:501d 504d 513d 519d 616:528d 531d 516e 516e 673:510e 507e 501e 501e 727:498e 498e 492e 489e 784:489e 486e 483e 478e 838:476e 474e 471e 465g 895:459w 456w 453w 459g 949:459w 459g 459g']];
const tone={w:'',g:'',d:'',e:''},hue={w:'#fff',g:'#808080',d:'#262626',e:'#3c3c3c'};
for(const [w,step,zero,s] of histogram){let x=0;for(const t of s.split(' ')){const p=t.split(':');if(p[1])x=+p[0];else x+=step;
  const v=p[p.length-1],n=parseInt(v),a=Math.round(py(w,Math.min(n,zero))),b=Math.round(py(w,Math.max(n,zero)));
  if(b>a)tone[v.slice(-1)]+=rect(Math.floor(px(w,x)),a,1,b-a)}}
let s=grid(931,1134,[949,985,1021,1057,1093,1129]);
for(const k in tone)s+=`<path d="${tone[k]}" fill="${hue[k]}" shape-rendering="crispEdges"/>`;
for(const [from,to,n] of [[165,180,4],[216,267,12],[355,360,2],[415,485,16],[526,560,8],[628,628,1],[735,745,3],[819,910,21],[989,989,1],[1207,1225,5],[1425,1442,5],[1609,1689,18],[1748,1799,12],[1813,1828,4]])
  for(let i=0;i<n;i++)s+=`<circle cx="${n>1?from+(to-from)*i/(n-1)+.5:from+.5}" cy="1057.500" r="2.500" fill="#980000"/>`;
document.getElementById('study').innerHTML=s;

// each label starts at its grid line and is as wide as the step to the next one
let labels=`<span style="width:${(times[0][1]-4)/18.33}%"></span>`;
times.forEach(([t,x],i)=>{const next=times[i+1];labels+=`<span style="width:${next?(next[1]-x)/18.33+'%':'auto'}">${t}</span>`});
document.getElementById('times').innerHTML=labels;
</script>
</body>
</html>
